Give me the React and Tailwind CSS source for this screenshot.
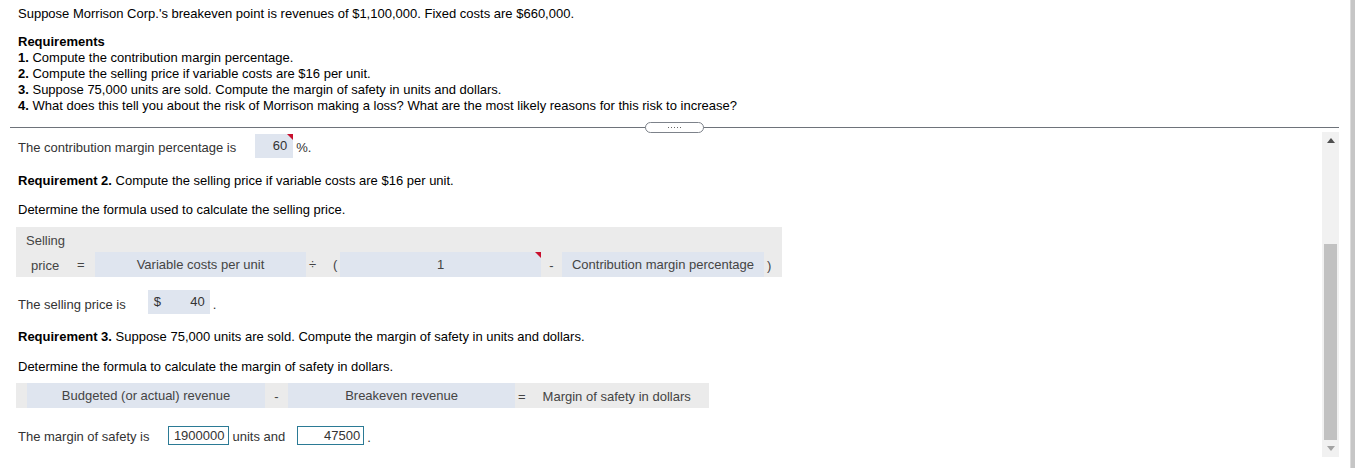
import React from 'react';

const Corner = () => (
  <svg className="absolute top-0 right-0" width="6" height="6" viewBox="0 0 6 6">
    <polygon points="0,0 6,0 6,6" fill="#c8102e" />
  </svg>
);

const Scrollbar = () => (
  <div className="mt-[4px] w-[17px] h-[325px] bg-[#f1f1f1] flex flex-col shrink-0">
    <div className="h-[17px] flex items-center justify-center">
      <svg width="8" height="5" viewBox="0 0 8 5">
        <polygon points="4,0 8,5 0,5" fill="#505050" />
      </svg>
    </div>
    <div className="flex-1 flex flex-col justify-end px-[2px]">
      <div className="h-[196px] bg-[#c1c1c1]" />
    </div>
    <div className="h-[17px] flex items-center justify-center">
      <svg width="8" height="5" viewBox="0 0 8 5">
        <polygon points="0,0 8,0 4,5" fill="#a3a3a3" />
      </svg>
    </div>
  </div>
);

export default function App() {
  return (
    <div className="flex h-[468px] w-[1355px] bg-white font-['Liberation_Sans',Arial,sans-serif] text-[13px] leading-4 text-black overflow-hidden">
      <div className="flex-1 flex flex-col pr-[11px]">
        {/* Problem statement */}
        <div className="pt-[6px] pl-[18px]">
          <p>Suppose Morrison Corp.'s breakeven point is revenues of $1,100,000. Fixed costs are $660,000.</p>
          <p className="mt-[12px] font-bold">Requirements</p>
          <p><b>1.</b> Compute the contribution margin percentage.</p>
          <p><b>2.</b> Compute the selling price if variable costs are $16 per unit.</p>
          <p><b>3.</b> Suppose 75,000 units are sold. Compute the margin of safety in units and dollars.</p>
          <p><b>4.</b> What does this tell you about the risk of Morrison making a loss? What are the most likely reasons for this risk to increase?</p>
        </div>

        {/* Divider with handle */}
        <div className="relative ml-[10px] mt-[13px] h-px bg-[#6e737a]">
          <div className="absolute left-[635px] -top-[5px] w-[59px] h-[11px] rounded-full border border-[#7d828a] bg-white flex items-center justify-center gap-[2px]">
            <span className="w-px h-px bg-[#666]" />
            <span className="w-px h-px bg-[#666]" />
            <span className="w-px h-px bg-[#666]" />
            <span className="w-px h-px bg-[#666]" />
            <span className="w-px h-px bg-[#666]" />
          </div>
        </div>

        <div className="flex flex-1">
          <div className="flex-1 flex flex-col text-[#333]">
            {/* Requirement 1 answer */}
            <div className="mt-[6px] ml-[18px] flex items-center h-[24px]">
              <span className="mt-[3px]">The contribution margin percentage is</span>
              <span className="relative ml-[19px] w-[38px] h-[24px] bg-[#dfe5ef] flex items-center justify-end pr-[6px]">
                60
                <Corner />
              </span>
              <span className="ml-[3px] mt-[3px]">%.</span>
            </div>

            <p className="mt-[15px] ml-[18px] text-black"><b>Requirement 2.</b> Compute the selling price if variable costs are $16 per unit.</p>
            <p className="mt-[13px] ml-[18px] text-black">Determine the formula used to calculate the selling price.</p>

            {/* Selling price formula */}
            <div className="mt-[9px] ml-[16px] w-[766px] h-[50px] bg-[#ebebeb] flex flex-col text-[#444]">
              <div className="h-[25px] flex items-center pl-[10px] pt-[2px]">Selling</div>
              <div className="h-[25px] flex items-center">
                <span className="w-[79px] flex items-center">
                  <span className="ml-[15px] w-[46px] mt-[3px]">price</span>
                  <span>=</span>
                </span>
                <span className="w-[211px] h-full bg-[#dfe5ef] flex items-center justify-center">Variable costs per unit</span>
                <span className="w-[34px] flex items-center">
                  <span className="ml-[3px] w-[24px]">÷</span>
                  <span>(</span>
                </span>
                <span className="relative w-[201px] h-full bg-[#dfe5ef] flex items-center justify-center">
                  1
                  <Corner />
                </span>
                <span className="w-[21px] text-center mt-[3px]">-</span>
                <span className="w-[202px] h-full bg-[#dfe5ef] flex items-center justify-center">Contribution margin percentage</span>
                <span className="ml-[3px] mt-[3px]">)</span>
              </div>
            </div>

            {/* Selling price answer */}
            <div className="mt-[13px] ml-[18px] flex items-center h-[24px]">
              <span className="mt-[5px]">The selling price is</span>
              <span className="ml-[22px] w-[62px] h-[24px] bg-[#dfe5ef] flex items-center justify-between px-[6px] pr-[5px]">
                <span>$</span>
                <span>40</span>
              </span>
              <span className="ml-[3px] mt-[6px]">.</span>
            </div>

            <p className="mt-[15px] ml-[18px] text-black"><b>Requirement 3.</b> Suppose 75,000 units are sold. Compute the margin of safety in units and dollars.</p>
            <p className="mt-[14px] ml-[18px] text-black">Determine the formula to calculate the margin of safety in dollars.</p>

            {/* Margin of safety formula */}
            <div className="mt-[8px] ml-[16px] w-[693px] h-[25px] bg-[#ebebeb] flex items-center text-[#444]">
              <span className="ml-[11px] w-[238px] h-full bg-[#dfe5ef] flex items-center justify-center">Budgeted (or actual) revenue</span>
              <span className="w-[23px] text-center mt-[3px]">-</span>
              <span className="w-[227px] h-full bg-[#dfe5ef] flex items-center justify-center">Breakeven revenue</span>
              <span className="ml-[3px] mt-[2px]">=</span>
              <span className="ml-[17px] mt-[2px]">Margin of safety in dollars</span>
            </div>

            {/* Margin of safety answer */}
            <div className="mt-[18px] ml-[18px] flex items-center h-[19px]">
              <span className="mt-[3px]">The margin of safety is</span>
              <span className="ml-[18px] w-[61px] h-[19px] border border-[#2b7a95] flex items-center justify-end pr-[3px]">1900000</span>
              <span className="ml-[4px] mt-[3px]">units and</span>
              <span className="ml-[12px] w-[67px] h-[19px] border border-[#2b7a95] flex items-center justify-end pr-[3px]">47500</span>
              <span className="ml-[3px] mt-[5px]">.</span>
            </div>
          </div>
          <Scrollbar />
        </div>
      </div>
      <div className="w-[5px] h-full bg-[#c6c6c6] border-l border-[#dcdcdc]" />
    </div>
  );
}
